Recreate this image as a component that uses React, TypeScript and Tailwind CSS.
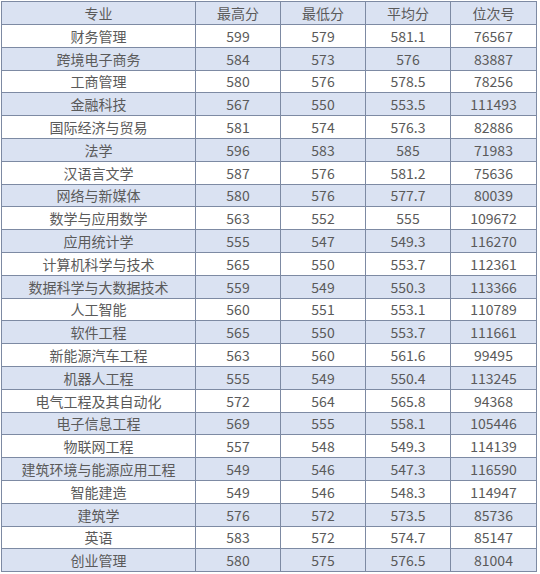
import React from "react";

const rows: [string, string, string, string, string][] = [
  ["财务管理", "599", "579", "581.1", "76567"],
  ["跨境电子商务", "584", "573", "576", "83887"],
  ["工商管理", "580", "576", "578.5", "78256"],
  ["金融科技", "567", "550", "553.5", "111493"],
  ["国际经济与贸易", "581", "574", "576.3", "82886"],
  ["法学", "596", "583", "585", "71983"],
  ["汉语言文学", "587", "576", "581.2", "75636"],
  ["网络与新媒体", "580", "576", "577.7", "80039"],
  ["数学与应用数学", "563", "552", "555", "109672"],
  ["应用统计学", "555", "547", "549.3", "116270"],
  ["计算机科学与技术", "565", "550", "553.7", "112361"],
  ["数据科学与大数据技术", "559", "549", "550.3", "113366"],
  ["人工智能", "560", "551", "553.1", "110789"],
  ["软件工程", "565", "550", "553.7", "111661"],
  ["新能源汽车工程", "563", "560", "561.6", "99495"],
  ["机器人工程", "555", "549", "550.4", "113245"],
  ["电气工程及其自动化", "572", "564", "565.8", "94368"],
  ["电子信息工程", "569", "555", "558.1", "105446"],
  ["物联网工程", "557", "548", "549.3", "114139"],
  ["建筑环境与能源应用工程", "549", "546", "547.3", "116590"],
  ["智能建造", "549", "546", "548.3", "114947"],
  ["建筑学", "576", "572", "573.5", "85736"],
  ["英语", "583", "572", "574.7", "85147"],
  ["创业管理", "580", "575", "576.5", "81004"],
];

const head = ["专业", "最高分", "最低分", "平均分", "位次号"];

export default function App() {
  return (
    <div className="w-[540px] h-[574px] bg-white pt-px pl-px">
      <table
        className="border-collapse table-fixed text-[14px] text-[#5a5a5a]"
        style={{ fontFamily: '"Noto Sans CJK SC", "Noto Sans", sans-serif' }}
      >
        <colgroup>
          <col className="w-[194px]" />
          <col className="w-[85px]" />
          <col className="w-[85px]" />
          <col className="w-[85px]" />
          <col className="w-[86px]" />
        </colgroup>
        <thead>
          <tr className="h-[23px] bg-[#dae2f2]">
            {head.map((h) => (
              <th key={h} className="border border-[#7d8aa3] font-normal p-0 leading-none text-center">
                {h}
              </th>
            ))}
          </tr>
        </thead>
        <tbody>
          {rows.map((r, i) => (
            <tr key={r[0]} className={`h-[22.8px] ${i % 2 === 0 ? "bg-white" : "bg-[#dae2f2]"}`}>
              {r.map((c, j) => (
                <td key={j} className="border border-[#7d8aa3] p-0 leading-none text-center">
                  {c}
                </td>
              ))}
            </tr>
          ))}
        </tbody>
      </table>
    </div>
  );
}
